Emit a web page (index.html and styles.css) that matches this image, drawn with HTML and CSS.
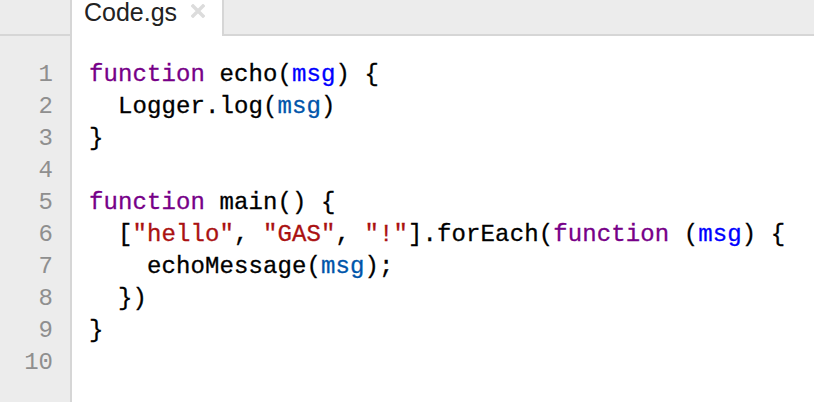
FILE: index.html
```html
<!DOCTYPE html>
<html>
<head>
<meta charset="utf-8">
<link rel="stylesheet" href="styles.css">
</head>
<body>
<div class="editor">
  <div class="tabbar">
    <div class="tab-spacer"></div>
    <div class="tab">
      <span class="tab-name">Code.gs</span>
      <svg class="tab-close" width="14" height="14" viewBox="0 0 14 14"><path d="M2 2 L12 12 M12 2 L2 12" stroke="#dcdcdc" stroke-width="3.4" stroke-linecap="square"/></svg>
    </div>
    <div class="tab-rest"></div>
  </div>
  <div class="body">
    <div class="gutter">
      <div>1</div><div>2</div><div>3</div><div>4</div><div>5</div><div>6</div><div>7</div><div>8</div><div>9</div><div>10</div>
    </div>
    <div class="code">
<div class="ln"><span class="kw">function</span> echo(<span class="def">msg</span>) {</div>
<div class="ln">  Logger.log(<span class="v2">msg</span>)</div>
<div class="ln">}</div>
<div class="ln"> </div>
<div class="ln"><span class="kw">function</span> main() {</div>
<div class="ln">  [<span class="str">"hello"</span>, <span class="str">"GAS"</span>, <span class="str">"!"</span>].forEach(<span class="kw">function</span> (<span class="def">msg</span>) {</div>
<div class="ln">    echoMessage(<span class="v2">msg</span>);</div>
<div class="ln">  })</div>
<div class="ln">}</div>
<div class="ln"> </div>
    </div>
  </div>
</div>
</body>
</html>
```
FILE: styles.css
```css
html, body {
  margin: 0;
  padding: 0;
  background: #ffffff;
}
.editor {
  width: 814px;
  height: 402px;
  overflow: hidden;
  display: flex;
  flex-direction: column;
}
.tabbar {
  display: flex;
  height: 36px;
  flex: none;
}
.tab-spacer {
  width: 70px;
  background: #ececec;
  border-bottom: 2px solid #d6d6d6;
}
.tab {
  background: #ffffff;
  border-left: 2px solid #d6d6d6;
  border-right: 2px solid #d6d6d6;
  display: flex;
  align-items: flex-start;
  padding-left: 12px;
  box-sizing: border-box;
  width: 154px;
}
.tab-name {
  font-family: "Liberation Sans", Arial, sans-serif;
  font-size: 25px;
  line-height: 1;
  color: #222222;
  margin-top: 0;
}
.tab-close {
  margin-left: 14px;
  margin-top: 4px;
}
.tab-rest {
  flex: 1;
  background: #ececec;
  border-bottom: 2px solid #d6d6d6;
}
.body {
  flex: 1;
  display: flex;
}
.gutter {
  width: 70px;
  background: #ececec;
  border-right: 2px solid #d6d6d6;
  padding-top: 23px;
  font-family: "Liberation Mono", "DejaVu Sans Mono", monospace;
  font-size: 24px;
  line-height: 32px;
  color: #8f8f8f;
  text-align: right;
}
.gutter div {
  padding-right: 17px;
}
.code {
  flex: 1;
  padding-top: 23px;
  padding-left: 17px;
  font-family: "Liberation Mono", "DejaVu Sans Mono", monospace;
  font-size: 24px;
  letter-spacing: 0.1px;
  line-height: 32px;
  color: #000000;
  -webkit-text-stroke: 0.3px currentColor;
}
.ln {
  white-space: pre;
  height: 32px;
}
.kw { color: #770088; }
.def { color: #0000ff; }
.v2 { color: #0055aa; }
.str { color: #aa1111; }
```
